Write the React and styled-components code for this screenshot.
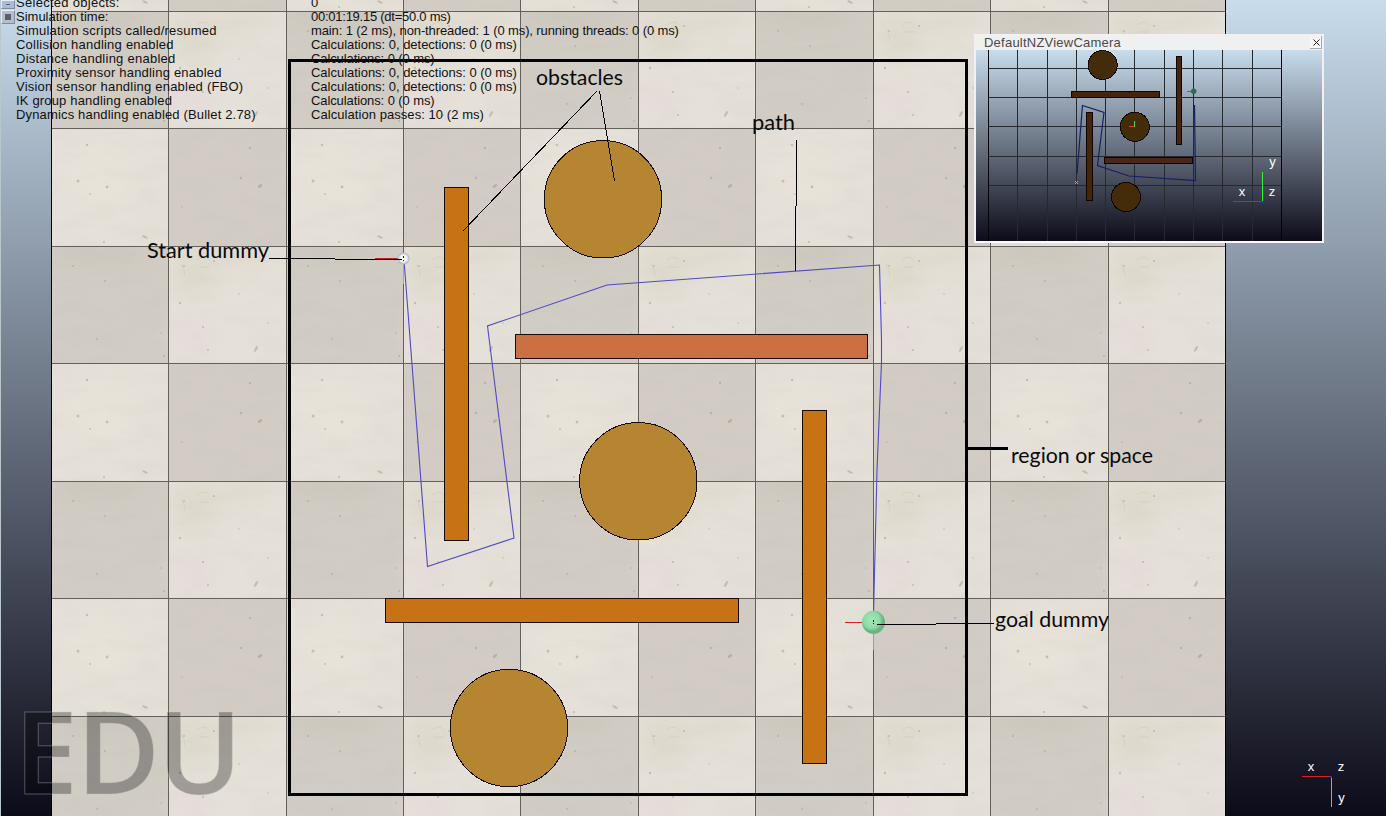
import React from "react";
import styled, { createGlobalStyle } from "styled-components";

const GlobalStyle = createGlobalStyle`
  body { margin: 0; overflow: hidden; }
`;

const Viewport = styled.main`
  position: relative;
  width: 1386px;
  height: 816px;
  overflow: hidden;
  background: linear-gradient(#c8dcec, #0c0b19);
  font-family: "Liberation Sans", Arial, sans-serif;
`;

const Scene = styled.svg`
  position: absolute;
  inset: 0;
  display: block;
`;

const Note = styled.text`
  font-family: Lato, Calibri, sans-serif;
  font-size: 21.5px;
  fill: #0a0a0a;
`;

const AxisText = styled.text`
  font-family: "Liberation Sans", Arial, sans-serif;
  font-size: 13px;
  fill: #fff;
  text-anchor: middle;
`;

const Watermark = styled.text`
  font-family: "Open Sans", sans-serif;
  font-weight: 600;
  font-size: 115px;
  fill: rgba(0, 0, 0, 0.3);
  stroke: rgba(200, 200, 200, 0.35);
  stroke-width: 1px;
`;

const StatusPanel = styled.section`
  position: absolute;
  top: -4px;
  left: 16px;
  display: grid;
  grid-template-columns: 295px auto;
  grid-auto-rows: 14px;
  color: #111;
  font-size: 13px;
  line-height: 14px;
  white-space: nowrap;
`;

const StatusText = styled.span`
  letter-spacing: ${(p) => p.$tracking || 0}px;
`;

const ToolStrip = styled.div`
  position: absolute;
  top: 0;
  left: 0;
  width: 15px;
  height: 816px;
  border-left: 1px solid #b9c6cc;
  box-sizing: border-box;
  display: flex;
  flex-direction: column;
  gap: 1px;
`;

const ToolButton = styled.span`
  box-sizing: border-box;
  width: 14px;
  height: ${(p) => p.$height}px;
  border: 1px solid #e6edf5;
  border-right-color: #7f8ba5;
  border-bottom-color: #7f8ba5;
  background: ${(p) => p.$color};
  display: flex;
  align-items: center;
  justify-content: center;
`;

const ToolMark = styled.i`
  width: ${(p) => p.$w}px;
  height: ${(p) => p.$h}px;
  background: #5b5f69;
`;

const CameraWindow = styled.section`
  position: absolute;
  left: 974px;
  top: 34px;
  width: 350px;
  height: 209px;
  box-sizing: border-box;
  border: 2px solid #f1f0f3;
  border-bottom-color: #fdf8ff;
  display: flex;
  flex-direction: column;
  background: #f0f0f0;
`;

const TitleBar = styled.header`
  height: 14px;
  flex: none;
  display: flex;
  justify-content: space-between;
  padding-left: 8px;
  color: #4a4a4a;
  font-size: 13px;
  line-height: 14px;
`;

const Title = styled.span`
  letter-spacing: 0.23px;
`;

const CloseButton = styled.span`
  width: 12px;
  height: 13px;
  box-sizing: border-box;
  padding-left: 2px;
  border-right: 1px solid #aaa;
  border-bottom: 1px solid #aaa;
  background: #f6f6f6;
  display: flex;
  align-items: center;
  justify-content: center;
`;

const CameraView = styled.svg`
  display: block;
  width: 346px;
  height: 191px;
`;

const stats = [
  ["Selected objects:", "0", 0.28, 0],
  ["Simulation time:", "00:01:19.15 (dt=50.0 ms)", 0, -0.25],
  ["Simulation scripts called/resumed", "main: 1 (2 ms), non-threaded: 1 (0 ms), running threads: 0 (0 ms)", 0.21, -0.11],
  ["Collision handling enabled", "Calculations: 0, detections: 0 (0 ms)", 0.23, -0.02],
  ["Distance handling enabled", "Calculations: 0 (0 ms)", 0.25, -0.1],
  ["Proximity sensor handling enabled", "Calculations: 0, detections: 0 (0 ms)", 0.21, -0.02],
  ["Vision sensor handling enabled (FBO)", "Calculations: 0, detections: 0 (0 ms)", 0.22, -0.02],
  ["IK group handling enabled", "Calculations: 0 (0 ms)", 0.17, -0.1],
  ["Dynamics handling enabled (Bullet 2.78)", "Calculation passes: 10 (2 ms)", 0.16, 0.06],
];

const gridX = [168, 286, 403, 520, 638, 755, 873, 990, 1108];
const gridY = [11, 128, 246, 363, 481, 598, 716];
const miniX = [1017, 1047, 1076, 1105, 1134, 1164, 1193, 1222, 1252];
const miniY = [68, 97, 126, 156, 185];

const specks = [
  [54, 35, 1], [46, 93, 0.9], [22, 20, 1], [110, 87, 0.8], [113, 110, 1],
  [129, 57, 1.2], [163, 15, 1.1], [152, 81, 1.1], [133, 20, 1], [188, 48, 0.8], [157, 104, 1],
  [56, 176, 1.4], [27, 170, 1.5], [39, 183, 0.9], [36, 134, 1.2], [53, 231, 1.1],
  [190, 167, 1.2], [199, 137, 1.2], [131, 196, 0.8], [217, 77, 0.8],
];

function FloorPattern() {
  return (
    <defs>
      <filter id="soft" x="-60%" y="-60%" width="220%" height="220%">
        <feGaussianBlur stdDeviation="10" />
      </filter>
      <filter id="grain" x="0" y="0" width="100%" height="100%">
        <feTurbulence type="fractalNoise" baseFrequency="0.025 0.07" numOctaves="3" seed="8" />
        <feColorMatrix values="0 0 0 0 .45  0 0 0 0 .42  0 0 0 0 .34  .5 0 0 0 -.19" />
      </filter>
      <pattern id="floor" x="51" y="11" width="235" height="235" patternUnits="userSpaceOnUse">
        <rect width="235" height="235" fill="#e5e0d8" />
        <rect width="117.5" height="117.5" fill="#d1ccc4" />
        <rect x="117.5" y="117.5" width="117.5" height="117.5" fill="#d2ccc5" />
        <g filter="url(#soft)">
          <ellipse cx="142" cy="25" rx="22" ry="25" fill="#d8d3c1" opacity=".45" />
          <ellipse cx="139" cy="90" rx="20" ry="18" fill="#e8dcdd" opacity=".7" />
          <ellipse cx="190" cy="10" rx="35" ry="7" fill="#d8d1c3" opacity=".6" />
          <ellipse cx="50" cy="165" rx="35" ry="30" fill="#ebe5dc" opacity=".6" />
          <ellipse cx="48" cy="8" rx="50" ry="7" fill="#c4bdb2" opacity=".4" />
        </g>
        <rect width="235" height="235" filter="url(#grain)" opacity=".3" />
        {specks.map(([x, y, r]) => (
          <circle key={`${x}-${y}`} cx={x} cy={y} r={r} fill="#989184" opacity=".45" />
        ))}
        <g fill="#91897a" opacity=".42">
          <ellipse cx="205" cy="103" rx="3.2" ry="1.2" transform="rotate(-60 205 103)" />
          <ellipse cx="94" cy="226" rx="3" ry="1.1" transform="rotate(25 94 226)" />
          <ellipse cx="209" cy="175" rx="2.6" ry="1.5" transform="rotate(-35 209 175)" />
        </g>
        <g fill="none" stroke="#b9ae86" opacity=".25">
          <path d="M130 18q4 5 4 12M146 14q8 -6 12 0M148 21h10" />
        </g>
      </pattern>
      <linearGradient id="viewSky" x1="0" y1="0" x2="0" y2="1">
        <stop offset="0" stopColor="#c8dcec" />
        <stop offset="1" stopColor="#0c0b19" />
      </linearGradient>
      <radialGradient id="goalFill" cx=".42" cy=".4">
        <stop offset="0" stopColor="#a5e6b9" />
        <stop offset=".7" stopColor="#8edba7" />
        <stop offset="1" stopColor="#66b480" />
      </radialGradient>
      <radialGradient id="startFill">
        <stop offset="0" stopColor="#fff" />
        <stop offset=".6" stopColor="#eceef5" />
        <stop offset="1" stopColor="#a9acb4" />
      </radialGradient>
    </defs>
  );
}

function MainScene() {
  return (
    <Scene width="1386" height="816" viewBox="0 0 1386 816">
      <FloorPattern />
      <rect x="51" y="0" width="1175" height="816" fill="url(#floor)" />
      <g fill="#64605c" shapeRendering="crispEdges">
        {gridX.map((x) => <rect key={x} x={x} y="0" width="1" height="816" />)}
        {gridY.map((y) => <rect key={y} x="51" y={y} width="1174" height="1" />)}
        <rect x="51" y="0" width="1" height="816" fill="#000" />
        <rect x="1225" y="0" width="1" height="816" fill="#000" />
      </g>

      <Watermark x="14 76 157" y="794">EDU</Watermark>

      <g stroke="#160d08" shapeRendering="crispEdges">
        <rect x="444.5" y="187.5" width="24" height="353" fill="#c87216" />
        <rect x="515.5" y="334.5" width="352" height="24" fill="#ca7043" />
        <rect x="802.5" y="410.5" width="24" height="353" fill="#c87216" />
        <rect x="385.5" y="598.5" width="353" height="24" fill="#c87216" />
        <circle cx="603" cy="199.3" r="58.7" fill="#b68532" />
        <circle cx="638.3" cy="481.3" r="58.7" fill="#b68532" />
        <circle cx="509" cy="728" r="58.7" fill="#b68532" />
      </g>

      <polyline
        points="404,260 427.5,566.5 514,538 487.5,326 607,285 879.5,265 881.5,340 881.5,362 877,470 873.5,615"
        fill="none" stroke="#504ac6" strokeWidth="1.1"
      />

      <g shapeRendering="crispEdges">
        <rect x="375" y="258" width="26" height="1" fill="#c01d1d" />
        <rect x="402.5" y="264" width="1.5" height="20" fill="#4fe064" />
        <rect x="845" y="622" width="18" height="1" fill="#dc2613" />
        <rect x="873" y="633" width="1" height="17" fill="#22f51e" />
      </g>
      <circle cx="403.5" cy="258.5" r="6" fill="url(#startFill)" />
      <circle cx="873.5" cy="622.3" r="11.5" fill="url(#goalFill)" />
      <g fill="#17203a" shapeRendering="crispEdges">
        <rect x="403" y="256" width="1" height="2" />
        <rect x="403" y="260" width="1" height="1" />
        <rect x="873" y="620" width="1" height="2" />
        <rect x="873" y="623" width="1" height="1" />
      </g>

      <g fill="#000" shapeRendering="crispEdges">
        <rect x="269" y="258" width="66" height="1" />
        <rect x="335" y="259" width="67" height="1" />
        <rect x="877" y="624" width="59" height="1" />
        <rect x="936" y="623" width="58" height="1" />
        <rect x="796" y="140" width="1" height="66" />
        <rect x="795" y="206" width="1" height="65" />
        <rect x="967" y="447" width="41" height="3" />
      </g>
      <path d="M597 91L462.5 231.5M599.5 91L614.5 181" stroke="#000" shapeRendering="crispEdges" />
      <rect x="289.5" y="60.5" width="677" height="734" fill="none" stroke="#000" strokeWidth="3" shapeRendering="crispEdges" />

      <Note x="536" y="85" textLength="87" lengthAdjust="spacingAndGlyphs">obstacles</Note>
      <Note x="752" y="130" textLength="43" lengthAdjust="spacingAndGlyphs">path</Note>
      <Note x="147" y="258" textLength="122" lengthAdjust="spacingAndGlyphs">Start dummy</Note>
      <Note x="1011" y="463" textLength="142" lengthAdjust="spacingAndGlyphs">region or space</Note>
      <Note x="995" y="627" textLength="114" lengthAdjust="spacingAndGlyphs">goal dummy</Note>

      <g shapeRendering="crispEdges">
        <rect x="1302" y="776" width="29" height="1" fill="#d3202b" />
        <rect x="1331" y="778" width="1" height="29" fill="#2df52d" />
        <rect x="1330" y="776" width="2" height="2" fill="#2438c8" />
      </g>
      <AxisText x="1311" y="771">x</AxisText>
      <AxisText x="1341" y="771">z</AxisText>
      <AxisText x="1341.5" y="802">y</AxisText>
    </Scene>
  );
}

function CameraScene() {
  return (
    <CameraView viewBox="976 50 346 191">
      <rect x="976" y="50" width="346" height="191" fill="url(#viewSky)" />
      <g fill="#252a31" shapeRendering="crispEdges">
        {miniX.map((x) => <rect key={x} x={x} y="50" width="1" height="191" />)}
        {miniY.map((y) => <rect key={y} x="988" y={y} width="294" height="1" />)}
        <rect x="988" y="50" width="1" height="191" fill="#050507" />
        <rect x="1281" y="50" width="1" height="191" fill="#050507" />
      </g>
      <g fill="#46260b" stroke="#0b0603" shapeRendering="crispEdges">
        <circle cx="1102.7" cy="65" r="14.5" fill="#442c0b" />
        <circle cx="1134.8" cy="126.8" r="14.5" fill="#442c0b" />
        <circle cx="1126" cy="197" r="14.5" fill="#442c0b" />
        <rect x="1071.5" y="91.5" width="88" height="6" />
        <rect x="1176.5" y="56.5" width="5" height="88" />
        <rect x="1086.5" y="112.5" width="6" height="88" />
        <rect x="1104.5" y="157.5" width="88" height="6" fill="#4b2719" />
      </g>
      <polyline points="1077,174 1082.5,105.5 1104,112.5 1097.5,165.5 1129,176 1195.5,180.5 1194.5,105"
        fill="none" stroke="#151f66" strokeWidth="1.2" />
      <g shapeRendering="crispEdges">
        <rect x="1187" y="91" width="5" height="1" fill="#d33" />
        <rect x="1129" y="126" width="5" height="1" fill="#f03420" />
        <rect x="1134" y="121" width="1" height="6" fill="#43d923" />
        <rect x="1071" y="183" width="4" height="1" fill="#a1283c" />
      </g>
      <circle cx="1193.7" cy="91.3" r="2.7" fill="#2c6d4c" />
      <path d="M1075 181l3 3m0 -3l-3 3" stroke="#bd9b9d" />
      <g shapeRendering="crispEdges">
        <rect x="1233" y="201" width="29" height="1" fill="#d3202b" />
        <rect x="1262" y="172" width="1" height="29" fill="#2df52d" />
        <rect x="1262" y="201" width="1" height="3" fill="#1a28d8" />
      </g>
      <AxisText x="1242" y="196">x</AxisText>
      <AxisText x="1272" y="196">z</AxisText>
      <AxisText x="1272.5" y="166">y</AxisText>
    </CameraView>
  );
}

export default function App() {
  return (
    <Viewport>
      <GlobalStyle />
      <MainScene />
      <ToolStrip>
        <ToolButton $height={9} $color="#a9bbd9"><ToolMark $w={4} $h={1} /></ToolButton>
        <ToolButton $height={14} $color="#b4bfce"><ToolMark $w={6} $h={6} /></ToolButton>
      </ToolStrip>
      <StatusPanel>
        {stats.map(([label, value, labelTracking, valueTracking]) => (
          <React.Fragment key={label}>
            <StatusText $tracking={labelTracking}>{label}</StatusText>
            <StatusText $tracking={valueTracking}>{value}</StatusText>
          </React.Fragment>
        ))}
      </StatusPanel>
      <CameraWindow>
        <TitleBar>
          <Title>DefaultNZViewCamera</Title>
          <CloseButton>
            <svg width="7" height="7" viewBox="0 0 7 7"><path d="M.5 .5l6 6m0 -6l-6 6" stroke="#222" /></svg>
          </CloseButton>
        </TitleBar>
        <CameraScene />
      </CameraWindow>
    </Viewport>
  );
}
